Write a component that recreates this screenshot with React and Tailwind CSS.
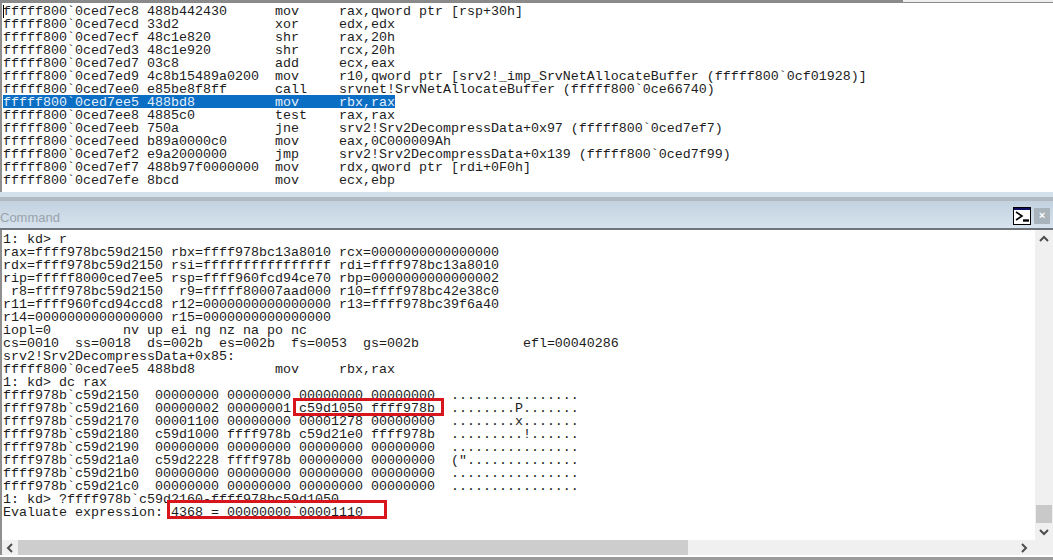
const top = [
  ["fffff800`0ced7ec8", "488b442430", "mov", "rax,qword ptr [rsp+30h]"],
  ["fffff800`0ced7ecd", "33d2", "xor", "edx,edx"],
  ["fffff800`0ced7ecf", "48c1e820", "shr", "rax,20h"],
  ["fffff800`0ced7ed3", "48c1e920", "shr", "rcx,20h"],
  ["fffff800`0ced7ed7", "03c8", "add", "ecx,eax"],
  ["fffff800`0ced7ed9", "4c8b15489a0200", "mov", "r10,qword ptr [srv2!_imp_SrvNetAllocateBuffer (fffff800`0cf01928)]"],
  ["fffff800`0ced7ee0", "e85be8f8ff", "call", "srvnet!SrvNetAllocateBuffer (fffff800`0ce66740)"],
  ["fffff800`0ced7ee5", "488bd8", "mov", "rbx,rax"],
  ["fffff800`0ced7ee8", "4885c0", "test", "rax,rax"],
  ["fffff800`0ced7eeb", "750a", "jne", "srv2!Srv2DecompressData+0x97 (fffff800`0ced7ef7)"],
  ["fffff800`0ced7eed", "b89a0000c0", "mov", "eax,0C000009Ah"],
  ["fffff800`0ced7ef2", "e9a2000000", "jmp", "srv2!Srv2DecompressData+0x139 (fffff800`0ced7f99)"],
  ["fffff800`0ced7ef7", "488b97f0000000", "mov", "rdx,qword ptr [rdi+0F0h]"],
  ["fffff800`0ced7efe", "8bcd", "mov", "ecx,ebp"],
];

const command = [
  "1: kd> r",
  "rax=ffff978bc59d2150 rbx=ffff978bc13a8010 rcx=0000000000000000",
  "rdx=ffff978bc59d2150 rsi=ffffffffffffffff rdi=ffff978bc13a8010",
  "rip=fffff8000ced7ee5 rsp=ffff960fcd94ce70 rbp=0000000000000002",
  " r8=ffff978bc59d2150  r9=fffff80007aad000 r10=ffff978bc42e38c0",
  "r11=ffff960fcd94ccd8 r12=0000000000000000 r13=ffff978bc39f6a40",
  "r14=0000000000000000 r15=0000000000000000",
  "iopl=0         nv up ei ng nz na po nc",
  "cs=0010  ss=0018  ds=002b  es=002b  fs=0053  gs=002b             efl=00040286",
  "srv2!Srv2DecompressData+0x85:",
  "fffff800`0ced7ee5 488bd8          mov     rbx,rax",
  "1: kd> dc rax",
  "ffff978b`c59d2150  00000000 00000000 00000000 00000000  ................",
  "ffff978b`c59d2160  00000002 00000001 c59d1050 ffff978b  ........P.......",
  "ffff978b`c59d2170  00001100 00000000 00001278 00000000  ........x.......",
  "ffff978b`c59d2180  c59d1000 ffff978b c59d21e0 ffff978b  .........!......",
  "ffff978b`c59d2190  00000000 00000000 00000000 00000000  ................",
  "ffff978b`c59d21a0  c59d2228 ffff978b 00000000 00000000  (\"..............",
  "ffff978b`c59d21b0  00000000 00000000 00000000 00000000  ................",
  "ffff978b`c59d21c0  00000000 00000000 00000000 00000000  ................",
  "1: kd> ?ffff978b`c59d2160-ffff978bc59d1050",
  "Evaluate expression: 4368 = 00000000`00001110",
];

function Chevron({ d }) {
  return (
    <svg width="10" height="8" viewBox="0 0 10 8" className="block">
      <path d={d} fill="none" stroke="#4d4d4d" strokeWidth="2" />
    </svg>
  );
}

export default function App() {
  return (
    <div
      className="flex h-[560px] w-[1053px] flex-col overflow-hidden bg-white text-[13.33px] leading-[15px] text-[#1c1c1c]"
      style={{ fontFamily: '"Liberation Mono", "Courier New", monospace' }}
    >
      <div className="flex h-[3px] shrink-0">
        <div className="w-[903px] bg-[#8a8a8a]" />
        <div className="flex-1 border-b border-[#8a8a8a] bg-[#eeeeee]" />
      </div>

      <div className="relative h-[189px] shrink-0 border-l-2 border-[#8f8f8f] pt-px pl-px whitespace-pre">
        <div className="absolute top-[2px] left-px h-[13px] w-px bg-black" />
        {top.map((r, i) => {
          const line = r[0] + " " + r[1].padEnd(16) + r[2].padEnd(8) + r[3];
          return (
            <div key={r[0]} className="h-[13px]">
              {i === 7 ? <span className="inline-block h-[13px] bg-[#0a6fc4] text-[#e4eefa]">{line}</span> : line}
            </div>
          );
        })}
      </div>

      <div className="h-[5px] shrink-0 bg-[#d3e1ec]" />
      <div className="h-[4px] shrink-0 bg-[#b1b9c2]" />
      <div className="flex h-[27px] shrink-0 items-center justify-between bg-gradient-to-b from-[#c3d2df] to-[#d6e3ef] pr-[3px]">
        <span className="pt-[5px] text-[13px] text-[#9aa3ab]" style={{ fontFamily: '"Liberation Sans", sans-serif' }}>
          Command
        </span>
        <div className="flex items-center gap-[3px] pt-[3px]">
          <div className="flex h-[18px] w-[18px] flex-col border border-black bg-white">
            <div className="h-[2px] bg-[#101060]" />
            <svg width="16" height="14" viewBox="0 0 16 14">
              <path d="M2 2 L8 6 L2 10" fill="none" stroke="#000" strokeWidth="1.6" />
              <path d="M9 10.5 H15" stroke="#000" strokeWidth="2.4" />
            </svg>
          </div>
          <div className="flex h-[16px] w-[16px] items-center justify-center bg-[#a9b3bc] text-[11px] font-bold text-white">×</div>
        </div>
      </div>
      <div className="h-[2px] shrink-0 bg-[#6f7478]" />

      <div className="flex min-h-0 flex-1">
        <div className="relative flex-1 border-l-2 border-[#8f8f8f] pt-[2px] pl-px whitespace-pre">
          {command.map((l, i) => (
            <div key={i} className="h-[13px]">{l}</div>
          ))}
          <div className="absolute top-[168px] left-[291px] h-[18px] w-[151px] border-[3px] border-[#d8151d]" />
          <div className="absolute top-[270px] left-[165px] h-[19px] w-[220px] border-[3px] border-[#d8151d]" />
        </div>
        <div className="flex w-[18px] shrink-0 flex-col items-center bg-[#f0f0f0]">
          <div className="flex h-[18px] items-center"><Chevron d="M1 6 L5 2 L9 6" /></div>
          <div className="flex-1" />
          <div className="h-[18px] w-[16px] bg-[#c9c9c9]" />
          <div className="flex h-[17px] items-center"><Chevron d="M1 2 L5 6 L9 2" /></div>
        </div>
      </div>

      <div className="flex h-[15px] shrink-0 items-center border-l-2 border-[#8f8f8f] bg-[#f0f0f0]">
        <div className="flex w-[16px] justify-center">
          <svg width="8" height="10" viewBox="0 0 8 10"><path d="M6 1 L2 5 L6 9" fill="none" stroke="#4d4d4d" strokeWidth="2" /></svg>
        </div>
        <div className="h-full w-[670px] bg-[#cdcdcd]" />
        <div className="flex-1" />
        <div className="flex w-[36px] pl-[3px]">
          <svg width="8" height="10" viewBox="0 0 8 10"><path d="M2 1 L6 5 L2 9" fill="none" stroke="#4d4d4d" strokeWidth="2" /></svg>
        </div>
      </div>
      <div className="h-[2px] shrink-0 bg-white" />
      <div className="h-[3px] shrink-0 bg-[#9b9b9b]" />
    </div>
  );
}
